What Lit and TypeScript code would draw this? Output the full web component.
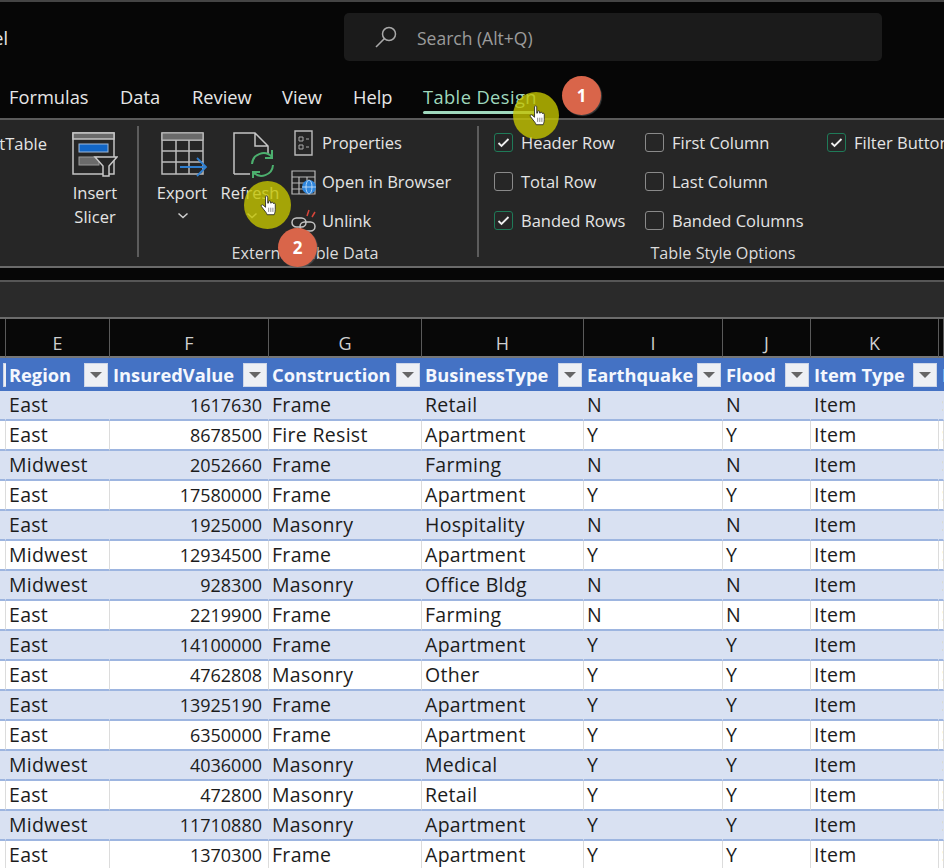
import { LitElement, html, css, svg } from "lit";
import { customElement } from "lit/decorators.js";

const cols = ["", "E", "F", "G", "H", "I", "J", "K", ""];
const heads = ["", "Region", "InsuredValue", "Construction", "BusinessType", "Earthquake", "Flood", "Item Type", "I"];
const rows: string[][] = [
  ["East", "1617630", "Frame", "Retail", "N", "N"],
  ["East", "8678500", "Fire Resist", "Apartment", "Y", "Y"],
  ["Midwest", "2052660", "Frame", "Farming", "N", "N"],
  ["East", "17580000", "Frame", "Apartment", "Y", "Y"],
  ["East", "1925000", "Masonry", "Hospitality", "N", "N"],
  ["Midwest", "12934500", "Frame", "Apartment", "Y", "Y"],
  ["Midwest", "928300", "Masonry", "Office Bldg", "N", "N"],
  ["East", "2219900", "Frame", "Farming", "N", "N"],
  ["East", "14100000", "Frame", "Apartment", "Y", "Y"],
  ["East", "4762808", "Masonry", "Other", "Y", "Y"],
  ["East", "13925190", "Frame", "Apartment", "Y", "Y"],
  ["East", "6350000", "Frame", "Apartment", "Y", "Y"],
  ["Midwest", "4036000", "Masonry", "Medical", "Y", "Y"],
  ["East", "472800", "Masonry", "Retail", "Y", "Y"],
  ["Midwest", "11710880", "Masonry", "Apartment", "Y", "Y"],
  ["East", "1370300", "Frame", "Apartment", "Y", "Y"],
];

const hand = svg`<svg viewBox="0 0 20 26" width="17" height="22">
  <path d="M6.500 2.200c0-1.600 2.600-1.600 2.600 0v7.500l1-.2V8c0-1.400 2.300-1.400 2.400 0v1.600l.9-.1c.2-1.300 2.200-1.200 2.300.2l.2.600c.3-1 2-.8 2.100.5v6.500c0 3-.8 4-1.300 6H8.400c-.6-2-2.200-3.800-3.600-5.500L1.600 13.600c-1-1.300.8-2.800 2-1.700l2.900 2.600z" fill="#fff" stroke="#222" stroke-width="1"/>
  <path d="M10.200 15v5M12.700 15v5M15.200 15v5" stroke="#555" stroke-width=".8" fill="none"/>
</svg>`;

@customElement("app-root")
export class AppRoot extends LitElement {
  static styles = css`
    :host { display: block; position: relative; width: 944px; height: 868px; overflow: hidden; background: #060606; font-family: "Open Sans", "Noto Sans", sans-serif; color: #e6e6e6; }
    * { box-sizing: border-box; }
    .top { height: 118px; display: flex; flex-direction: column; border-top: 2px solid #444; }
    .title-row { height: 72px; display: flex; align-items: flex-start; padding-top: 11px; }
    .title { width: 344px; height: 48px; line-height: 50px; font-size: 18px; overflow: hidden; display: flex; justify-content: flex-end; }
    .title span { margin-right: 336px; white-space: nowrap; }
    .search { width: 538px; height: 48px; border-radius: 5px; background: #1b1b1b; display: flex; align-items: center; padding-left: 30px; gap: 19px; color: #9b9b9b; font-size: 17.500px; }
    .search span { padding-top: 1px; }
    .tabs { display: flex; padding-left: 9px; font-size: 18.300px; height: 44px; line-height: 46px; }
    .tabs span { white-space: nowrap; }
    .t1 { width: 111px; } .t2 { width: 72px; } .t3 { width: 90px; } .t4 { width: 71px; } .t5 { width: 70px; }
    .tabs .active { color: #9fd8bd; position: relative; height: 40px; letter-spacing: .4px; }
    .active::after { content: ""; position: absolute; left: 0; right: 0; bottom: 0; height: 3px; border-radius: 2px; background: #9fd8bd; }
    .ribbon { height: 150px; border-top: 2px solid #5a5a5a; border-bottom: 2px solid #6a6a6a; background: #262626; display: flex; font-size: 16.500px; color: #e4e4e4; }
    .g-left { flex: none; width: 139px; border-right: 2px solid #5c5c5c; margin: 6px 0 9px; display: flex; }
    .clip { width: 47px; overflow: hidden; display: flex; justify-content: flex-end; padding-top: 6px; white-space: nowrap; line-height: 24px; }
    .big { display: flex; flex-direction: column; align-items: center; text-align: center; line-height: 24px; }
    .slicer { margin-left: 22px; width: 52px; padding-top: 6px; }
    .big svg { margin-bottom: 3px; }
    .g-ext { flex: none; width: 340px; margin: 6px 0 9px; border-right: 2px solid #5c5c5c; display: flex; flex-direction: column; }
    .g-body { display: flex; flex: 1; padding-left: 14px; }
    .export { width: 58px; padding-top: 6px; }
    .export svg { margin-left: 2px; }
    .refresh { width: 80px; padding: 6px 8px 0 6px; }
    .refresh svg { margin-left: 4px; }
    .chev { height: 24px; display: flex; align-items: center; }
    .small { display: flex; flex-direction: column; margin-top: -3px; }
    .small div { height: 39px; display: flex; align-items: center; gap: 6px; white-space: nowrap; }
    .glabel { height: 25px; line-height: 27px; text-align: center; font-size: 16.200px; color: #dcdcdc; white-space: nowrap; }
    .g-ext .glabel { padding-right: 6px; }
    .g-style { flex: 1; min-width: 0; margin: 6px 0 9px; display: flex; flex-direction: column; }
    .checks { flex: 1; display: grid; grid-template-columns: 151px 182px 120px; padding-left: 15px; grid-auto-rows: 39px; margin-top: -3px; }
    .check { display: flex; align-items: center; gap: 8px; white-space: nowrap; }
    .box { width: 19px; height: 19px; border: 1.500px solid #8a8a8a; border-radius: 3px; display: flex; align-items: center; justify-content: center; flex: none; }
    .box.on { border-color: #1f7a58; }
    .g-style .glabel { width: 488px; }
    .gap { height: 12px; }
    .fbar { height: 39px; border-top: 2px solid #565656; border-bottom: 2px solid #6b6b6b; background: #2a2a2a; }
    .sheet { display: grid; grid-template-columns: 6px 104px 159px 153px 162px 139px 88px 128px 5px; }
    .col { height: 39px; background: #080808; color: #cfcfcf; font-size: 18px; display: flex; align-items: flex-end; justify-content: center; padding-bottom: 1px; border-right: 1px solid #5a5a5a; border-bottom: 2px solid #777; line-height: 24px; }
    .cell, .head { white-space: nowrap; overflow: hidden; }
    .head { height: 33px; background: #4472c4; color: #f4f7fd; font-weight: 700; font-size: 18.300px; display: flex; align-items: center; padding-left: 3px; justify-content: space-between; }
    .fb { flex: none; width: 24px; height: 24px; margin-right: 2px; background: #eef0f4; border: 1px solid #cdd6e8; display: flex; align-items: center; justify-content: center; }
    .fb i { display: block; width: 0; height: 0; border-left: 6px solid transparent; border-right: 6px solid transparent; border-top: 6px solid #666; }
    .cell { height: 30px; line-height: 28px; font-size: 19.500px; letter-spacing: .3px; color: #1c1c1c; padding-left: 3px; background: #fff; border-bottom: 2px solid #9db5e0; border-right: 1px solid #dcdcdc; }
    .cell.band { background: #d9e1f2; border-right-color: #d9e1f2; }
    .cell.num { font-size: 18px; letter-spacing: 0; text-align: right; padding-right: 6px; padding-left: 0; }
    .spot { position: absolute; border-radius: 50%; background: rgba(196, 196, 0, .8); }
    .spot1 { left: 513px; top: 92px; width: 46px; height: 47px; }
    .spot2 { left: 244px; top: 181px; width: 47px; height: 48px; }
    .hand { position: absolute; line-height: 0; }
    .h1 { left: 529px; top: 105px; }
    .h2 { left: 260px; top: 195px; }
    .badge { position: absolute; width: 39px; height: 39px; border-radius: 50%; background: #d9654a; color: #fff; font-weight: 700; font-size: 17px; display: flex; align-items: center; justify-content: center; box-shadow: 1px 1px 1px rgba(90,90,90,.7); }
    .b1 { left: 562px; top: 76px; }
    .b2 { left: 278px; top: 228px; }
  `;

  private chk(label: string, on = false) {
    return html`<div class="check"><span class="box ${on ? "on" : ""}">${on
      ? html`<svg width="13" height="11" viewBox="0 0 13 11"><path d="M1.500 6l3 3 7-7" stroke="#eee" stroke-width="1.800" fill="none"/></svg>`
      : ""}</span>${label}</div>`;
  }

  private chev() {
    return html`<div class="chev"><svg width="12" height="7" viewBox="0 0 12 7"><path d="M1.500 1.500L6 5.500l4.500-4" stroke="#d0d0d0" stroke-width="1.500" fill="none"/></svg></div>`;
  }

  render() {
    return html`
      <div class="top">
        <div class="title-row">
          <div class="title"><span>Excel</span></div>
          <div class="search">
            <svg width="24" height="24" viewBox="0 0 24 24"><circle cx="15" cy="9" r="6.500" stroke="#a8a8a8" stroke-width="1.500" fill="none"/><path d="M10.500 13.500L2 22" stroke="#a8a8a8" stroke-width="1.600" fill="none"/></svg>
            <span>Search (Alt+Q)</span>
          </div>
        </div>
        <div class="tabs">
          <span class="t1">Formulas</span><span class="t2">Data</span><span class="t3">Review</span><span class="t4">View</span><span class="t5">Help</span><span class="active">Table Design</span>
        </div>
      </div>
      <div class="ribbon">
        <div class="g-left">
          <div class="clip"><span>PivotTable</span></div>
          <div class="big slicer">
            <svg width="46" height="46" viewBox="0 0 46 46"><path d="M1 1h41v41H1z" fill="none" stroke="#c4c4c4" stroke-width="1.500"/><path d="M1 1h41v6H1z" fill="#6a6a6a" stroke="#c4c4c4" stroke-width="1.500"/><rect x="7" y="12" width="29" height="8" fill="#1266c6" stroke="#9fb9d9"/><rect x="7" y="25" width="20" height="8" fill="#6b6b6b" stroke="#999"/><path d="M23 25h22l-8 9v10h-6V34z" fill="#262626" stroke="#c8c8c8" stroke-width="1.500"/></svg>
            <span>Insert</span><span>Slicer</span>
          </div>
        </div>
        <div class="g-ext">
          <div class="g-body">
            <div class="big export">
              <svg width="50" height="46" viewBox="0 0 50 46"><path d="M4 1h41v41H4zM4 8h41M4 19h41M4 30h41M18 8v34M31 8v34" fill="none" stroke="#bcbcbc" stroke-width="1.500"/><path d="M4 1h41v7H4z" fill="#6a6a6a" stroke="#bcbcbc" stroke-width="1.200"/><path d="M22 35h26M39 26l9 9-9 9" fill="none" stroke="#2f7fd0" stroke-width="1.800"/></svg>
              <span>Export</span>${this.chev()}
            </div>
            <div class="big refresh">
              <svg width="46" height="46" viewBox="0 0 46 46"><path d="M5 42V1h21l13 13v8M26 1v13h13M5 42h16" fill="none" stroke="#c4c4c4" stroke-width="1.500"/><path d="M23 32a11.500 11.500 0 0 1 20-7M44 33a11.500 11.500 0 0 1-20 7M43 18v8h-7M24 47v-7h7" fill="none" stroke="#4caf6e" stroke-width="2"/></svg>
              <span>Refresh</span>${this.chev()}
            </div>
            <div class="small">
              <div><svg width="25" height="26" viewBox="0 0 25 26"><path d="M4 1h17v24H4z" fill="none" stroke="#bbb" stroke-width="1.400"/><path d="M8 7h4v4H8zM8 15h4v4H8zM15 9h3M15 17h3" fill="none" stroke="#aaa"/></svg>Properties</div>
              <div><svg width="25" height="26" viewBox="0 0 25 26"><path d="M1 2h23v23H1zM1 8h23M1 14h23M1 20h14M8 8v17M16 8v6" fill="none" stroke="#b8b8b8" stroke-width="1.200"/><circle cx="18" cy="18" r="7" fill="#2f86dc"/><ellipse cx="18" cy="18" rx="3" ry="7" fill="none" stroke="#cfe4fa" stroke-width=".8"/><path d="M11 18h14" stroke="#cfe4fa" stroke-width=".8"/></svg>Open in Browser</div>
              <div><svg width="25" height="26" viewBox="0 0 25 26"><rect x="1" y="10" width="14" height="9" rx="4.500" fill="none" stroke="#c4c4c4" stroke-width="1.500"/><rect x="9" y="14" width="15" height="9" rx="4.500" fill="none" stroke="#c4c4c4" stroke-width="1.500"/><path d="M16 8l2-6M21 9l3-5M5 25l1-3" stroke="#d8453a" stroke-width="1.500"/></svg>Unlink</div>
            </div>
          </div>
          <div class="glabel">External Table Data</div>
        </div>
        <div class="g-style">
          <div class="checks">
            ${this.chk("Header Row", true)}${this.chk("First Column")}${this.chk("Filter Button", true)}
            ${this.chk("Total Row")}${this.chk("Last Column")}<span></span>
            ${this.chk("Banded Rows", true)}${this.chk("Banded Columns")}<span></span>
          </div>
          <div class="glabel">Table Style Options</div>
        </div>
      </div>
      <div class="gap"></div>
      <div class="fbar"></div>
      <div class="sheet">
        ${cols.map((c) => html`<div class="col">${c}</div>`)}
        ${heads.map((h, i) => html`<div class="head">${h ? html`<span>${h}</span>` : ""}${i < 8 ? html`<span class="fb"><i></i></span>` : ""}</div>`)}
        ${rows.map((r, ri) => {
          const b = ri % 2 === 0 ? "band" : "";
          return html`<div class="cell ${b}"></div>
            <div class="cell ${b}">${r[0]}</div>
            <div class="cell num ${b}">${r[1]}</div>
            <div class="cell ${b}">${r[2]}</div>
            <div class="cell ${b}">${r[3]}</div>
            <div class="cell ${b}">${r[4]}</div>
            <div class="cell ${b}">${r[5]}</div>
            <div class="cell ${b}">Item</div>
            <div class="cell ${b}">$</div>`;
        })}
      </div>
      <div class="spot spot1"></div>
      <div class="spot spot2"></div>
      <span class="h1 hand">${hand}</span>
      <span class="h2 hand">${hand}</span>
      <div class="badge b1">1</div>
      <div class="badge b2">2</div>
    `;
  }
}
